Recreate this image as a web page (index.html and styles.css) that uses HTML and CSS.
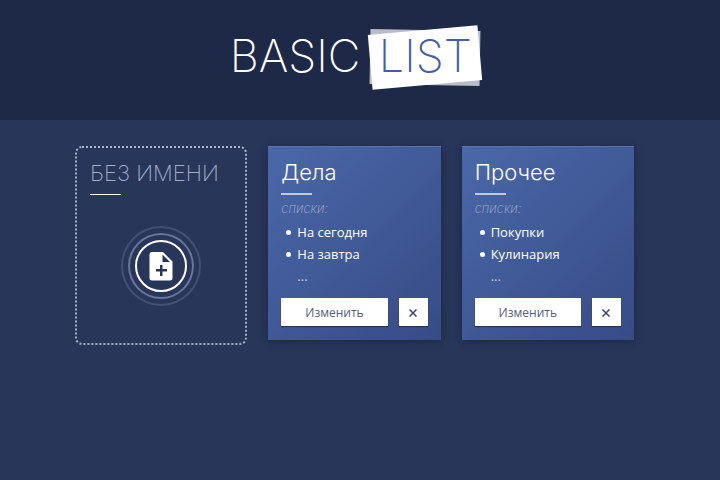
FILE: index.html
```html
<!DOCTYPE html>
<html lang="ru">
<head>
	<meta charset="UTF-8">
	<title>Basic List</title>
	<link rel="stylesheet" href="styles.css">
</head>
<body>

<header class="header">
	<h1 class="logo">BASIC<span class="logo-card"><span class="logo-text">LIST</span></span></h1>
</header>

<main class="lists">
	<section class="card card-new">
		<input class="card-name" type="text" placeholder="БЕЗ ИМЕНИ" aria-label="Название">
		<button class="add" type="button" aria-label="Добавить">
			<svg viewBox="0 0 24 30" width="24" height="30">
				<path fill="#fff" fill-rule="evenodd" d="M3 1H14L23.500 10.500V27A2.500 2.500 0 0 1 21 29.500H3A2.500 2.500 0 0 1 .5 27V3.500A2.500 2.500 0 0 1 3 1ZM13.500 3.500V11H21ZM11 14V18H7V20.500H11V25H13.500V20.500H18V18H13.500V14Z"/>
			</svg>
		</button>
	</section>

	<section class="card">
		<h2>Дела</h2>
		<p class="sub">списки:</p>
		<ul>
			<li>На сегодня</li>
			<li>На завтра</li>
			<li class="more">...</li>
		</ul>
		<div class="buttons">
			<button class="edit" type="button">Изменить</button>
			<button class="del" type="button" aria-label="Удалить">
				<svg viewBox="0 0 8 8" width="8" height="8"><path d="M.5 .5L7.500 7.500M7.500 .5L.5 7.500"/></svg>
			</button>
		</div>
	</section>

	<section class="card">
		<h2>Прочее</h2>
		<p class="sub">списки:</p>
		<ul>
			<li>Покупки</li>
			<li>Кулинария</li>
			<li class="more">...</li>
		</ul>
		<div class="buttons">
			<button class="edit" type="button">Изменить</button>
			<button class="del" type="button" aria-label="Удалить">
				<svg viewBox="0 0 8 8" width="8" height="8"><path d="M.5 .5L7.500 7.500M7.500 .5L.5 7.500"/></svg>
			</button>
		</div>
	</section>
</main>

</body>
</html>
```
FILE: styles.css
```css
* {
	box-sizing: border-box;
}
body, h1, h2, p, ul {
	margin: 0;
	padding: 0;
}
body {
	background-color: #273659;
	font-family: "Open Sans", "Noto Sans", sans-serif;
	font-size: 13px;
	color: #fff;
}
.header {
	height: 120px;
	padding: 25px 10px 0 0;
	background-color: #1e2847;
}
.logo {
	display: flex;
	justify-content: center;
	gap: 10px;
	font-family: Inter, sans-serif;
	font-size: 45px;
	font-weight: 200;
	line-height: 62px;
}
.logo-card {
	position: relative;
	width: 110px;
	text-align: center;
	color: #4560a0;
}
.logo-card::before,
.logo-card::after {
	content: "";
	position: absolute;
	left: 0;
	top: 5px;
	width: 110px;
	height: 55px;
	background-color: #fff;
	transform: rotate(-5deg);
}
.logo-card::before {
	background-color: #b9bdc9;
	transform: rotate(1deg);
}
.logo-text {
	position: relative;
	z-index: 1;
}
.lists {
	display: grid;
	grid-template-columns: repeat(3, 1fr);
	align-items: start;
	gap: 21px;
	padding: 26px 86px 26px 75px;
}
.card {
	padding: 11px 13px 14px;
	border-top: 1px solid #5b71a8;
	background: linear-gradient(135deg, #4a68a8, #374b87);
	box-shadow: 0 1px 6px rgba(15, 22, 48, .5);
}
.card-new {
	display: flex;
	flex-direction: column;
	height: 199px;
	border: 2px dotted #a9b2cb;
	border-radius: 7px;
	background: none;
	box-shadow: none;
}
.card h2,
.card-name {
	font-family: Inter, sans-serif;
	font-size: 22px;
	font-weight: 300;
	line-height: 28px;
}
.card h2::after,
.card-new::before {
	content: "";
	display: block;
	width: 31px;
	height: 2px;
	margin-top: 7px;
	background-color: #c0c9e0;
}
.card-name {
	width: 100%;
	height: 28px;
	padding: 0;
	border: 0;
	outline: 0;
	background: none;
	font-weight: 200;
	color: #fff;
}
.card-name::placeholder {
	color: #a3adca;
	opacity: 1;
}
.card-new::before {
	order: 1;
	height: 1px;
	background-color: #fff;
}
.add {
	order: 2;
	display: flex;
	align-items: center;
	justify-content: center;
	align-self: center;
	width: 52px;
	height: 52px;
	margin-top: 45px;
	padding: 0;
	border: 2px solid #fff;
	border-radius: 50%;
	background: none;
	box-shadow: 0 0 0 5px #273659, 0 0 0 7px #69759a, 0 0 0 12px #273659, 0 0 0 14px #435073;
	cursor: pointer;
}
.sub {
	margin-top: 4px;
	font-family: Inter, sans-serif;
	font-size: 13px;
	font-weight: 200;
	font-style: italic;
	line-height: 18px;
	color: #a3afd2;
}
.card ul {
	margin-top: 4px;
	padding-left: 16px;
	line-height: 22px;
	list-style: none;
}
.card li::before {
	content: "";
	display: inline-block;
	width: 5px;
	height: 5px;
	margin: 0 6px 2px -11px;
	border-radius: 50%;
	background-color: #fff;
}
.card .more {
	color: #c9d1e8;
}
.card .more::before {
	background: none;
}
.buttons {
	display: flex;
	justify-content: space-between;
	gap: 11px;
	margin-top: 11px;
}
.edit,
.del {
	height: 28px;
	padding: 0;
	border: 0;
	background-color: #fff;
	box-shadow: 0 1px 1px #24325c;
	font-family: "Open Sans", sans-serif;
	font-size: 12px;
	color: #515d7c;
	cursor: pointer;
}
.edit {
	flex: 1;
}
.del {
	width: 29px;
}
.del path {
	fill: none;
	stroke: #34466f;
	stroke-width: 1.5;
}
```
